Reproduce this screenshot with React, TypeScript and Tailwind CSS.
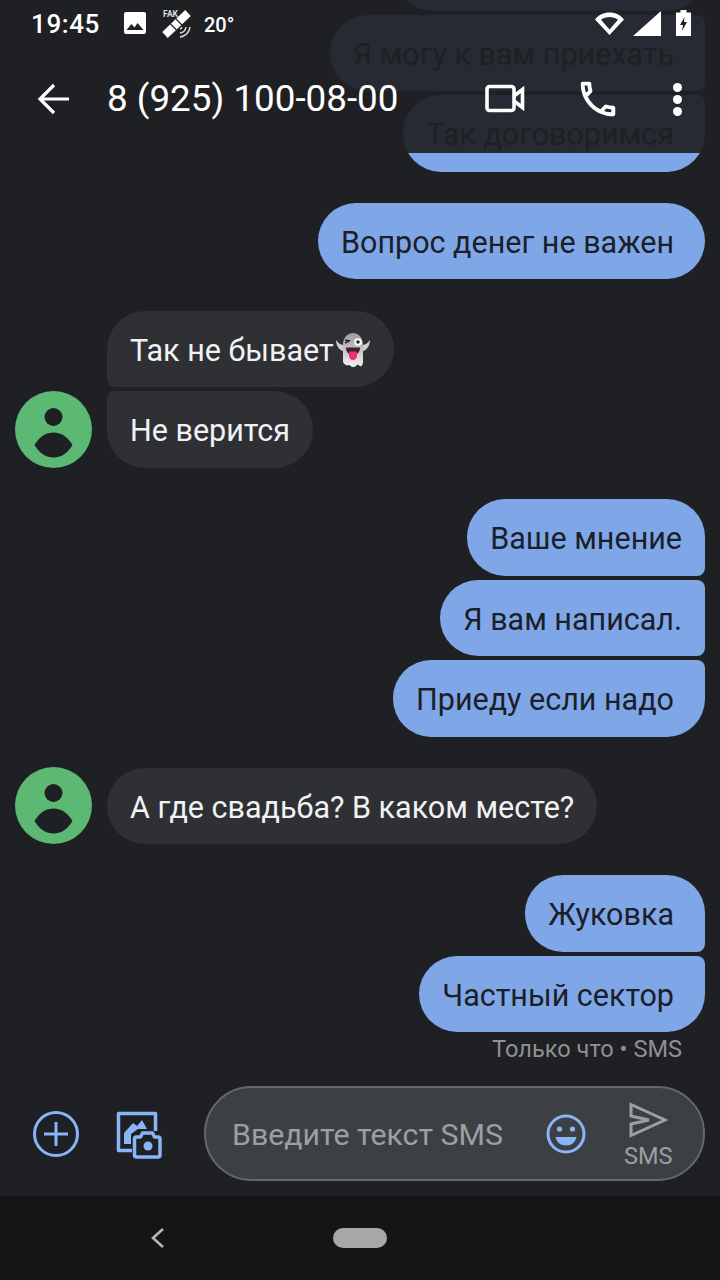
const font = "font-['Roboto',sans-serif]";

function Sent({ text, cls }: { text?: string; cls: string }) {
	return (
		<div className={`h-[76.5px] shrink-0 flex items-center pt-[4px] pl-[23px] bg-[#7fa7e8] text-[#1b2028] text-[30.5px] whitespace-nowrap ${cls}`}>
			{text}
		</div>
	);
}

function Received({ children, cls }: { children: React.ReactNode; cls: string }) {
	return (
		<div className={`h-[76.5px] shrink-0 flex items-center pt-[4px] pl-[23px] pr-[23px] bg-[#2f3034] text-[#f1f2f3] text-[30.5px] whitespace-nowrap ${cls}`}>
			{children}
		</div>
	);
}

function Avatar() {
	return (
		<div className="w-[77px] h-[77px] rounded-full bg-[#5bb974] flex items-center justify-center">
			<svg width="77" height="77" viewBox="0 0 77 77">
				<circle cx="38.5" cy="26" r="9" fill="#1f2023" />
				<path d="M19.500 54C24 46 31 41.500 38.500 41.500S53 46 57.500 54C53 62 46 66.500 38.500 66.500S24 62 19.500 54z" fill="#1f2023" />
			</svg>
		</div>
	);
}

function Ghost() {
	return (
		<svg width="36" height="36" viewBox="0 0 36 36" className="ml-[1px] -mt-[2px]">
			<defs>
				<linearGradient id="ghostBody" x1="0" y1="0" x2="0" y2="1">
					<stop offset="0" stopColor="#9b9ba0" />
					<stop offset="0.55" stopColor="#c9c9cd" />
					<stop offset="1" stopColor="#f4f4f6" />
				</linearGradient>
			</defs>
			<path d="M1 8c2 3 5 5 8 5l1 6C6 20 1 15 1 8zM35 8c-2 3-5 5-8 5l-1 6c4 1 9-4 9-11z" fill="#d0d0d4" />
			<path d="M8 13C8 6 12 1 18 1s10 5 10 12v17c0 3-2 5-3 4-2-1-2-2-3-1s-2 2-4 2-3-2-4-2-2 1-3 0-3-1-3-4z" fill="url(#ghostBody)" />
			<circle cx="23" cy="10" r="3.800" fill="#fff" />
			<circle cx="23" cy="10" r="1.800" fill="#2b2b2e" />
			<path d="M10 11l5-2.500M10 8l5 1" stroke="#2b2b2e" strokeWidth="1.500" fill="none" />
			<path d="M11 15.500h14c0 5-3 7.500-7 7.500s-7-2.500-7-7.500z" fill="#3a2226" />
			<path d="M14 19.500h8v4c0 3-2 4.500-4 4.500s-4-1.500-4-4.500z" fill="#e8336b" />
		</svg>
	);
}

export default function App() {
	return (
		<div className={`relative w-[720px] h-[1280px] overflow-hidden flex flex-col bg-[#1f2023] ${font}`}>
			{/* header над сообщениями */}
			<div className="absolute top-0 left-0 right-0 z-10 h-[153px] bg-[#1f2023]/[0.93]">
				<div className="h-[46px] flex items-center pl-[31px] pr-[29px] text-white">
					<span className="text-[26px] font-medium tracking-[0.6px] w-[92px] pt-[3px]">19:45</span>
					<svg width="24" height="24" viewBox="0 0 24 24" className="mr-[15px]">
						<rect x="1" y="1" width="22" height="22" rx="2" fill="#fff" />
						<path d="M3.500 19l5-6 3 3.500 3-4.500 6 7z" fill="#1f2023" />
					</svg>
					<svg width="30" height="30" viewBox="0 0 30 30" className="mr-[12px]">
						<path d="M3 27L26 5" stroke="#fff" strokeWidth="8" />
						<path d="M8.500 16l6 6M14 11l6 6" stroke="#1f2023" strokeWidth="1.200" />
						<path d="M18 29a11 11 0 0 0 10-10M18 25a7 7 0 0 0 6-6M18 21a3 3 0 0 0 2-2" stroke="#ddd" strokeWidth="1.500" fill="none" />
						<text x="1" y="9" fontSize="8.500" fontWeight="700" fill="#ddd" fontFamily="Roboto">FAK</text>
					</svg>
					<span className="text-[20px] font-medium pt-[3px]">20°</span>
					<div className="ml-auto flex items-center gap-[9px]">
						<svg width="29" height="24" viewBox="0 0 29 24">
							<path d="M14.500 24L0 8.500C3.500 4 8.500 1.500 14.500 1.500S25.500 4 29 8.500zM14.500 18.500L23 8.800C20.500 7 17.500 6 14.500 6S8.500 7 6 8.800z" fill="#fff" fillRule="evenodd" />
						</svg>
						<svg width="28" height="25" viewBox="0 0 28 25" className="mr-[6px]">
							<path d="M28 0v25H0z" fill="#fff" />
						</svg>
						<svg width="15" height="26" viewBox="0 0 15 26">
							<path d="M4.500 0h6v2.500H15V26H0V2.500h4.500z" fill="#fff" />
							<path d="M8.500 7L4 15h3l-1 6 5-9H8z" fill="#1f2023" />
						</svg>
					</div>
				</div>
				<div className="h-[106px] flex items-center text-white">
					<svg width="36" height="36" viewBox="0 0 36 36" className="ml-[36px]">
						<path d="M33 18H5M18 4L4 18l14 14" stroke="#fff" strokeWidth="3.200" fill="none" />
					</svg>
					<span className="ml-[35px] text-[36.8px] w-[291px] whitespace-nowrap">8 (925) 100-08-00</span>
					<svg width="40" height="30" viewBox="0 0 40 30" className="ml-[87px]">
						<rect x="2" y="2.500" width="27" height="24" rx="2.500" stroke="#fff" strokeWidth="3.600" fill="none" />
						<path d="M29 12l8.500-6.500v18L29 17" stroke="#fff" strokeWidth="3.600" fill="none" />
					</svg>
					<svg width="46" height="46" viewBox="0 0 24 24" className="ml-[50px]">
						<path d="M6.500 5c.06.89.21 1.760.45 2.590l-1.200 1.200c-.41-1.200-.67-2.470-.76-3.790H6.500M16.360 17.020c.85.240 1.720.390 2.600.450v1.490c-1.320-.090-2.590-.350-3.800-.750l1.200-1.190M7.500 3H4c-.55 0-1 .450-1 1 0 9.390 7.610 17 17 17 .55 0 1-.450 1-1v-3.490c0-.550-.450-1-1-1-1.240 0-2.450-.200-3.570-.570-.100-.040-.210-.050-.310-.050-.260 0-.510.100-.710.290l-2.200 2.200c-2.830-1.450-5.150-3.760-6.590-6.590l2.200-2.200c.280-.280.360-.670.250-1.020C8.700 6.450 8.500 5.250 8.500 4c0-.550-.450-1-1-1z" fill="#fff" />
					</svg>
					<div className="ml-[52px] flex flex-col gap-[3px]">
						<span className="w-[9px] h-[9px] rounded-full bg-white" />
						<span className="w-[9px] h-[9px] rounded-full bg-white" />
						<span className="w-[9px] h-[9px] rounded-full bg-white" />
					</div>
				</div>
			</div>

			{/* сообщения */}
			<div className="flex-1 min-h-0 flex flex-col justify-end items-end pr-[15px] overflow-hidden">
				<Sent cls="w-[310px] rounded-[38px]" />
				<div className="h-[4px] shrink-0" />
				<Sent text="Я могу к вам приехать" cls="pr-[31px] rounded-l-[38px] rounded-r-[8px]" />
				<div className="h-[4px] shrink-0" />
				<Sent text="Так договоримся" cls="pr-[31px] rounded-l-[38px] rounded-tr-[8px] rounded-br-[38px]" />
				<div className="h-[31px] shrink-0" />
				<Sent text="Вопрос денег не важен" cls="pr-[31px] rounded-[38px]" />
				<div className="h-[31.5px] shrink-0" />

				<div className="w-full pl-[15px] flex gap-[15px] items-end">
					<Avatar />
					<div className="flex flex-col items-start gap-[4px]">
						<Received cls="rounded-t-[38px] rounded-br-[38px] rounded-bl-[8px]">
							Так не бывает<Ghost />
						</Received>
						<Received cls="rounded-b-[38px] rounded-tr-[38px] rounded-tl-[8px]">Не верится</Received>
					</div>
				</div>
				<div className="h-[31.5px] shrink-0" />

				<div className="flex flex-col items-end gap-[4px]">
					<Sent text="Ваше мнение" cls="pr-[23px] rounded-l-[38px] rounded-tr-[38px] rounded-br-[8px]" />
					<Sent text="Я вам написал." cls="pr-[23px] rounded-l-[38px] rounded-r-[8px]" />
					<Sent text="Приеду если надо" cls="pr-[31px] rounded-l-[38px] rounded-tr-[8px] rounded-br-[38px]" />
				</div>
				<div className="h-[30.5px] shrink-0" />

				<div className="w-full pl-[15px] flex gap-[15px] items-end">
					<Avatar />
					<Received cls="rounded-[38px]">А где свадьба? В каком месте?</Received>
				</div>
				<div className="h-[31px] shrink-0" />

				<div className="flex flex-col items-end gap-[4px]">
					<Sent text="Жуковка" cls="pr-[31px] rounded-l-[38px] rounded-tr-[38px] rounded-br-[8px]" />
					<Sent text="Частный сектор" cls="pr-[31px] rounded-l-[38px] rounded-tr-[8px] rounded-br-[38px]" />
				</div>
				<div className="h-[33px] pt-[3px] mr-[23px] flex items-center text-[23.6px] text-[#8e9094] whitespace-nowrap">Только что • SMS</div>
				<div className="h-[21px] shrink-0" />
			</div>

			{/* ввод */}
			<div className="h-[110px] shrink-0 flex items-start">
				<svg width="48" height="48" viewBox="0 0 48 48" className="ml-[32px] mt-[24px]">
					<circle cx="24" cy="24" r="21.500" stroke="#8ab4f8" strokeWidth="3" fill="none" />
					<path d="M24 12v24M12 24h24" stroke="#8ab4f8" strokeWidth="3" />
				</svg>
				<svg width="48" height="48" viewBox="0 0 48 48" className="ml-[36px] mt-[25px]">
					<path d="M16 39.500H2.500V2.500H39.500V20" stroke="#8ab4f8" strokeWidth="3.500" fill="none" strokeLinejoin="round" />
					<path d="M8 33V22l9-10 4 3 5-6 5 9H22l-7 5v10z" fill="#8ab4f8" />
					<path d="M18.500 28a2 2 0 0 1 2-2h4l2-4h10l2 4h3.500a2 2 0 0 1 2 2v16a2 2 0 0 1-2 2H20.500a2 2 0 0 1-2-2z" fill="#1f2023" stroke="#8ab4f8" strokeWidth="3.500" strokeLinejoin="round" />
					<circle cx="32" cy="35" r="4.500" fill="#8ab4f8" />
				</svg>
				<div className="ml-[40px] w-[501px] h-[95px] rounded-[47.5px] border-2 border-[#65686b] bg-[#3c4043] flex items-center pl-[26px]">
					<span className="text-[30.3px] pt-[3px] text-[#9aa0a6] whitespace-nowrap w-[314px]">Введите текст SMS</span>
					<svg width="40" height="40" viewBox="0 0 40 40">
						<circle cx="20" cy="20" r="18" stroke="#8ab4f8" strokeWidth="3" fill="none" />
						<circle cx="13.500" cy="15" r="2.600" fill="#8ab4f8" />
						<circle cx="26.500" cy="15" r="2.600" fill="#8ab4f8" />
						<path d="M9.500 23h21c-1 5-5 8.500-10.500 8.500S10.500 28 9.500 23z" fill="#8ab4f8" />
					</svg>
					<div className="ml-[38px] mt-[3px] flex flex-col items-center gap-[6px]">
						<svg width="40" height="36" viewBox="0 0 40 36">
							<path d="M3 2.500L37 18L3 33.500V22L21 18L3 14z" stroke="#9aa0a6" strokeWidth="3" fill="none" />
						</svg>
						<span className="text-[23.5px] leading-[24px] text-[#9aa0a6]">SMS</span>
					</div>
				</div>
			</div>

			{/* навигация */}
			<div className="h-[84px] shrink-0 bg-[#141517] flex items-center">
				<svg width="16" height="22" viewBox="0 0 16 22" className="ml-[150px]">
					<path d="M13 2L3 11l10 9" stroke="#b5b5b5" strokeWidth="2.600" fill="none" />
				</svg>
				<div className="ml-[167px] w-[54px] h-[20px] rounded-full bg-[#a8a8a8]" />
			</div>
		</div>
	);
}
